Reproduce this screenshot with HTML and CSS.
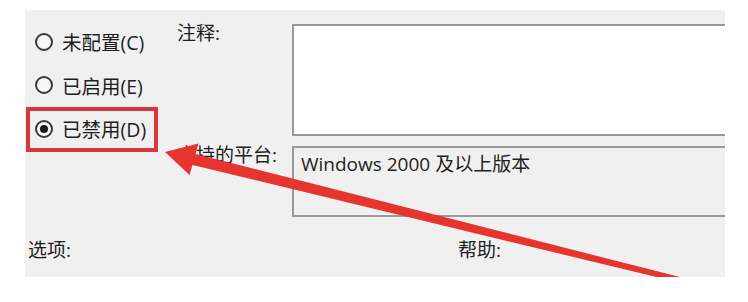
FILE: index.html
```html
<!DOCTYPE html>
<html>
<head>
    <title>已禁用</title>
    <link rel="stylesheet" href="styles.css">
</head>
<body>
    <div class="panel">
        <div class="top">
            <div class="radios">
                <div class="radio"><span class="dot"></span>未配置(C)</div>
                <div class="radio"><span class="dot"></span>已启用(E)</div>
                <div class="radio"><span class="dot checked"></span>已禁用(D)</div>
            </div>
            <div class="label label-comment">注释:</div>
            <div class="box comment"></div>
            <div class="label label-platform">支持的平台:</div>
            <div class="box platform">Windows 2000 及以上版本</div>
        </div>
        <div class="bottom">
            <div class="options">选项:</div>
            <div class="help">帮助:</div>
        </div>

        <div class="mark"></div>
        <svg class="arrow" width="700" height="267" viewBox="0 0 700 267">
            <polygon points="140,142 173.5,133.5 170.5,144 700.6,278.6 699.4,283.4 167.5,155 164.5,165" fill="#e6342f"/>
        </svg>
    </div>
</body>
</html>
```

FILE: styles.css
```css
body {
    margin: 0;
    background-color: #fff;
    font-family: 'Open Sans', 'Noto Sans CJK SC', sans-serif;
    font-size: 19px;
    color: #1e1e1e;
}

.panel {
    position: relative;
    overflow: hidden;
    margin: 10px 0 0 25px;
    width: 700px;
    height: 267px;
    background-color: #f0f0f0;
}

.top {
    display: grid;
    grid-template-columns: 152px 115px 1fr;
    grid-template-rows: 116px 71px;
    row-gap: 10px;
    padding-top: 10px;
}

.radios {
    grid-row: 1 / 3;
    padding-left: 10px;
}

.radio {
    display: flex;
    align-items: center;
    gap: 9px;
    height: 43.5px;
    white-space: nowrap;
    font-size: 19.5px;
}

.dot {
    box-sizing: border-box;
    width: 18px;
    height: 18px;
    border: 2px solid #3a3a3a;
    border-radius: 50%;
    background-color: #f7f7f7;
    display: flex;
    align-items: center;
    justify-content: center;
}

.dot.checked::after {
    content: "";
    width: 8px;
    height: 8px;
    border-radius: 50%;
    background-color: #1a1a1a;
}

.label {
    line-height: 20px;
    white-space: nowrap;
}

.label-comment {
    margin-top: 3px;
}

.label-platform {
    margin-top: -1px;
}

.box {
    border: 2px solid #9a9a9a;
    border-right: none;
}

.comment {
    margin-top: 4px;
    background-color: #fff;
}

.platform {
    padding: 3px 0 0 7px;
    line-height: 26px;
    background-color: #f0f0f0;
}

.bottom {
    display: flex;
    margin-top: 23px;
    line-height: 20px;
}

.options {
    padding-left: 3px;
    width: 430px;
}

.mark {
    position: absolute;
    left: 1px;
    top: 97px;
    width: 124px;
    height: 37px;
    border: 4px solid #d8363a;
}

.arrow {
    position: absolute;
    left: 0;
    top: 0;
}
```
